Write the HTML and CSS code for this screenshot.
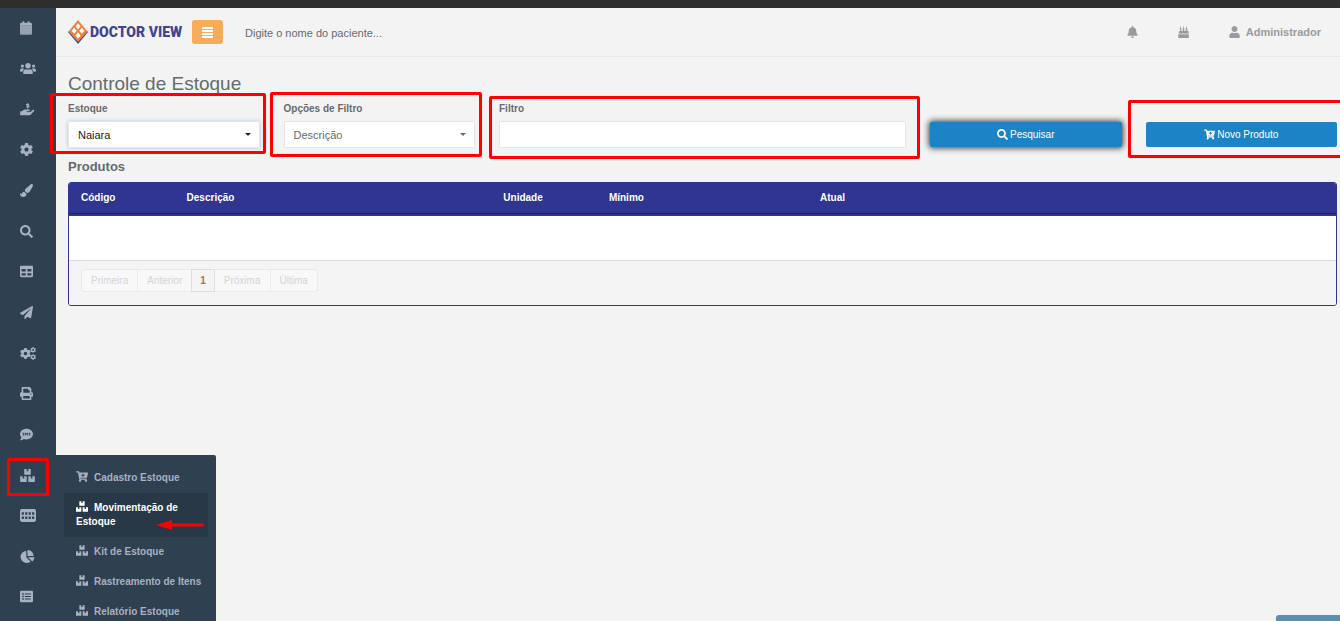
FILE: index.html
```
<!DOCTYPE html>
<html lang="pt-BR">
<head>
    <meta charset="UTF-8">
    <meta name="viewport" content="width=device-width, initial-scale=1.0">
    <title>Doctor View - Controle de Estoque</title>
    <link rel="stylesheet" href="styles.css">
</head>
<body>
    <!-- Shared icons -->
    <svg class="sprite" aria-hidden="true">
        <symbol id="boxes" viewBox="0 0 576 512"><path d="M560 288h-80v96l-32-21.3-32 21.3v-96h-80c-8.8 0-16 7.2-16 16v192c0 8.8 7.2 16 16 16h224c8.8 0 16-7.2 16-16V304c0-8.8-7.2-16-16-16zm-384-64h224c8.8 0 16-7.2 16-16V16c0-8.8-7.2-16-16-16h-80v96l-32-21.3L256 96V0h-80c-8.8 0-16 7.2-16 16v192c0 8.8 7.2 16 16 16zm64 64h-80v96l-32-21.3L96 384v-96H16c-8.8 0-16 7.2-16 16v192c0 8.8 7.2 16 16 16h224c8.8 0 16-7.2 16-16V304c0-8.8-7.2-16-16-16z"/></symbol>
        <symbol id="cart" viewBox="0 0 576 512"><path d="M504.717 320H211.572l6.545 32h268.418c15.401 0 26.816 14.301 23.403 29.319l-5.517 24.276C523.112 414.668 536 433.828 536 456c0 31.202-25.519 56.444-56.824 55.994-29.823-.429-54.35-24.631-55.155-54.447-.44-16.287 6.085-31.049 16.803-41.548H231.176C241.553 426.165 248 440.326 248 456c0 31.813-26.528 57.431-58.67 55.938-28.54-1.325-51.751-24.385-53.251-52.917-1.158-22.034 10.436-41.455 28.051-51.586L93.883 64H24C10.745 64 0 53.255 0 40V24C0 10.745 10.745 0 24 0h102.529c11.401 0 21.228 8.021 23.513 19.19L159.208 64H551.99c15.401 0 26.816 14.301 23.403 29.319l-47.273 208C525.637 312.246 515.923 320 504.717 320zM408 168h-48v-40c0-8.837-7.163-16-16-16h-16c-8.837 0-16 7.163-16 16v40h-48c-8.837 0-16 7.163-16 16v16c0 8.837 7.163 16 16 16h48v40c0 8.837 7.163 16 16 16h16c8.837 0 16-7.163 16-16v-40h48c8.837 0 16-7.163 16-16v-16c0-8.837-7.163-16-16-16z"/></symbol>
        <symbol id="search" viewBox="0 0 512 512"><path d="M505 442.7L405.3 343c-4.5-4.5-10.6-7-17-7H372c27.6-35.3 44-79.7 44-128C416 93.1 322.9 0 208 0S0 93.1 0 208s93.1 208 208 208c48.3 0 92.7-16.4 128-44v16.3c0 6.4 2.5 12.5 7 17l99.7 99.7c9.4 9.4 24.6 9.4 33.9 0l28.3-28.3c9.4-9.4 9.4-24.6.1-34zM208 336c-70.7 0-128-57.2-128-128 0-70.7 57.2-128 128-128 70.7 0 128 57.2 128 128 0 70.7-57.2 128-128 128z"/></symbol>
        <symbol id="cog" viewBox="12 8 488 496"><path d="M487.4 315.7l-42.6-24.6c4.3-23.2 4.3-47 0-70.2l42.6-24.6c4.9-2.8 7.1-8.6 5.5-14-11.1-35.6-30-67.8-54.7-94.6-3.8-4.1-10-5.1-14.8-2.3L380.8 110c-17.9-15.4-38.5-27.3-60.8-35.1V25.8c0-5.6-3.9-10.5-9.4-11.7-36.7-8.2-74.3-7.8-109.2 0-5.5 1.2-9.4 6.1-9.4 11.7V75c-22.2 7.9-42.8 19.8-60.8 35.1L88.7 85.5c-4.9-2.8-11-1.9-14.8 2.3-24.7 26.7-43.6 58.9-54.7 94.6-1.7 5.4.6 11.2 5.5 14L67.3 221c-4.3 23.2-4.3 47 0 70.2l-42.6 24.6c-4.9 2.8-7.1 8.6-5.5 14 11.1 35.6 30 67.8 54.7 94.6 3.8 4.1 10 5.1 14.8 2.3l42.6-24.6c17.9 15.4 38.5 27.3 60.8 35.1v49.2c0 5.6 3.9 10.5 9.4 11.7 36.7 8.2 74.3 7.8 109.2 0 5.5-1.2 9.4-6.1 9.4-11.7v-49.2c22.2-7.9 42.8-19.8 60.8-35.1l42.6 24.6c4.9 2.8 11 1.9 14.8-2.3 24.7-26.7 43.6-58.9 54.7-94.6 1.5-5.5-.7-11.3-5.6-14.1zM256 336c-44.1 0-80-35.9-80-80s35.9-80 80-80 80 35.9 80 80-35.9 80-80 80z"/></symbol>
    </svg>

    <div class="browser-bar"></div>
    <div class="wrapper">
        <!-- Sidebar -->
        <nav class="sidebar">
            <ul class="side-menu">
                <li><a href="#" aria-label="Agenda"><svg class="narrow" viewBox="0 0 448 512"><path opacity=".85" d="M12 176h424c6.600 0 12 5.400 12 12v276c0 26.500-21.500 48-48 48H48c-26.500 0-48-21.500-48-48V188c0-6.600 5.400-12 12-12z"/><path d="M448 176v-64c0-26.500-21.500-48-48-48h-48V12c0-6.600-5.400-12-12-12h-40c-6.600 0-12 5.400-12 12v52H160V12c0-6.600-5.400-12-12-12h-40c-6.600 0-12 5.400-12 12v52H48C21.500 64 0 85.500 0 112v64z"/></svg></a></li>
                <li><a href="#" aria-label="Pacientes"><svg class="wide" viewBox="0 0 640 512"><path d="M96 224c35.3 0 64-28.7 64-64s-28.7-64-64-64-64 28.7-64 64 28.7 64 64 64zm448 0c35.3 0 64-28.7 64-64s-28.7-64-64-64-64 28.7-64 64 28.7 64 64 64zm32 32h-64c-17.6 0-33.5 7.1-45.1 18.6 40.3 22.1 68.9 62 75.1 109.400h66c17.700 0 32-14.300 32-32v-32c0-35.300-28.700-64-64-64zm-256 0c61.900 0 112-50.100 112-112S381.900 32 320 32 208 82.100 208 144s50.100 112 112 112zm76.800 32h-8.300c-20.800 10-43.900 16-68.500 16s-47.600-6-68.500-16h-8.300C179.600 288 128 339.600 128 403.200V432c0 26.500 21.500 48 48 48h288c26.500 0 48-21.500 48-48v-28.800c0-63.600-51.600-115.200-115.200-115.200zm-223.700-13.400C161.500 263.100 145.600 256 128 256H64c-35.300 0-64 28.700-64 64v32c0 17.700 14.300 32 32 32h65.900c6.300-47.400 34.900-87.300 75.200-109.400z"/></svg></a></li>
                <li><a href="#" aria-label="Financeiro"><svg class="medium" viewBox="0 0 576 512"><path d="M0 336q0-16 16-16h56l46-38q30-22 66-22h168c20 0 34 16 32 36-2 16-16 28-34 28h-78c-10 0-16 6-16 14s6 14 16 14h118q14 0 24-8l92-74c14-10 30-10 42 0 14 12 12 34 0 44L410 464q-18 16-42 16H16q-16 0-16-16z"/><path d="M346 62c-20-24-98-20-98 10 0 40 104 16 104 56 0 38-78 40-108 12M298 -10v226" fill="none" stroke="currentColor" stroke-width="42"/></svg></a></li>
                <li><a href="#" aria-label="Configurações"><svg><use href="#cog"/></svg></a></li>
                <li><a href="#" aria-label="Aparência"><svg viewBox="0 0 512 512"><path d="M167.020 309.340c-40.120 2.580-76.530 17.860-97.190 72.300-2.350 6.210-8 9.980-14.590 9.980-11.110 0-45.460-27.670-55.250-34.350C0 439.620 37.930 512 128 512c75.860 0 128-43.770 128-120.190 0-3.110-.65-6.080-.97-9.130l-88.010-73.340zM457.890 0c-15.160 0-29.370 6.710-40.210 16.450C213.270 199.050 192 203.340 192 257.090c0 13.700 3.250 26.760 8.730 38.700l63.820 53.180c7.210 1.800 14.640 3.030 22.390 3.030 62.110 0 98.110-45.470 211.160-256.460 7.380-14.350 13.900-29.850 13.900-45.990C512 20.640 486 0 457.890 0z"/></svg></a></li>
                <li><a href="#" aria-label="Pesquisa"><svg><use href="#search"/></svg></a></li>
                <li><a href="#" aria-label="Tabelas"><svg viewBox="0 0 512 512"><path d="M464 32H48C21.490 32 0 53.490 0 80v352c0 26.510 21.490 48 48 48h416c26.510 0 48-21.490 48-48V80c0-26.510-21.490-48-48-48zM224 416H64v-96h160v96zm0-160H64v-96h160v96zm224 160H288v-96h160v96zm0-160H288v-96h160v96z"/></svg></a></li>
                <li><a href="#" aria-label="Envios"><svg viewBox="0 0 512 512"><path d="M476 3.200L12.500 270.600c-18.100 10.400-15.800 35.600 2.200 43.200L121 358.400l287.300-253.200c5.500-4.900 13.300 2.600 8.600 8.300L176 407v80.500c0 23.600 28.500 32.900 42.500 15.800L282 426l124.600 52.200c14.200 6 30.400-2.900 33-18.200l72-432C515 7.800 493.300-6.800 476 3.200z"/></svg></a></li>
                <li><a href="#" aria-label="Parâmetros"><svg class="wide" viewBox="0 0 640 512"><use href="#cog" x="0" y="36" width="440" height="440"/><use href="#cog" x="410" y="0" width="230" height="230"/><use href="#cog" x="410" y="282" width="230" height="230"/></svg></a></li>
                <li><a href="#" aria-label="Impressão"><svg viewBox="0 0 512 512"><path d="M448 192V77.250c0-8.490-3.370-16.620-9.370-22.630L393.370 9.370c-6-6-14.140-9.370-22.630-9.370H96C78.330 0 64 14.330 64 32v160c-35.350 0-64 28.650-64 64v112c0 8.840 7.160 16 16 16h48v96c0 17.670 14.330 32 32 32h320c17.670 0 32-14.330 32-32v-96h48c8.840 0 16-7.160 16-16V256c0-35.350-28.650-64-64-64zm-64 256H128v-96h256v96zm0-224H128V64h192v48c0 8.840 7.160 16 16 16h48v96zm48 72c-13.250 0-24-10.750-24-24 0-13.260 10.750-24 24-24s24 10.740 24 24c0 13.250-10.750 24-24 24z"/></svg></a></li>
                <li><a href="#" aria-label="SMS"><svg viewBox="0 0 512 512"><path fill-rule="evenodd" d="M256 32C115 32 0 125 0 240c0 50 21 95 57 131-13 50-54 95-55 95-5 6-1 14 6 14 66 0 116-32 140-51 33 12 69 19 108 19 141 0 256-93 256-208S397 32 256 32zM104 186h62v26h-36v14h36v74h-62v-26h36v-14h-36zm90 0h26l36 40 36-40h26v114h-28v-64l-34 38-34-38v64h-28zm152 0h62v26h-36v14h36v74h-62v-26h36v-14h-36z"/></svg></a></li>
                <li>
                    <a href="#" aria-label="Estoque"><svg class="medium"><use href="#boxes"/></svg></a>
                    <span class="mark mark-menu"></span>
                    <ul class="submenu">
                        <li><a href="#"><svg><use href="#cart"/></svg>Cadastro Estoque</a></li>
                        <li class="active">
                            <a href="#"><svg><use href="#boxes"/></svg>Movimentação de Estoque</a>
                            <svg class="arrow" viewBox="0 0 48 10" aria-hidden="true"><path d="M0 5L16 0v3.500h30q2 0 2 1.500t-2 1.500H16V10z"/></svg>
                        </li>
                        <li><a href="#"><svg><use href="#boxes"/></svg>Kit de Estoque</a></li>
                        <li><a href="#"><svg><use href="#boxes"/></svg>Rastreamento de Itens</a></li>
                        <li><a href="#"><svg><use href="#boxes"/></svg>Relatório Estoque</a></li>
                    </ul>
                </li>
                <li><a href="#" aria-label="Calendário"><svg class="wide" viewBox="0 0 640 512"><path fill-rule="evenodd" d="M72 0h496q72 0 72 72v368q0 72-72 72H72q-72 0-72-72V72q0-72 72-72zM70 130v100h86V130zm138 0v100h86V130zm138 0v100h86V130zm138 0v100h86V130zM70 300v100h86V300zm138 0v100h86V300zm138 0v100h86V300zm138 0v100h86V300z"/></svg></a></li>
                <li><a href="#" aria-label="Gráficos"><svg class="medium" viewBox="0 0 544 512"><path d="M527.790 288H290.500l158.030 158.030c6.040 6.040 15.980 6.530 22.190.68 38.700-36.460 65.320-85.610 73.130-140.860 1.340-9.460-6.510-17.850-16.060-17.850zm-15.830-64.800C503.720 103.740 408.260 8.280 288.800.04 279.680-.59 272 7.100 272 16.240V240h223.770c9.140 0 16.820-7.680 16.190-16.800zM224 288V50.710c0-9.550-8.390-17.400-17.840-16.060C86.990 51.490-4.100 155.600.14 280.370 4.500 408.510 114.830 513.590 243.030 511.980c50.400-.63 96.970-16.870 135.260-44.030 7.900-5.600 8.420-17.230 1.570-24.080L224 288z"/></svg></a></li>
                <li><a href="#" aria-label="Relatórios"><svg viewBox="0 0 512 512"><path fill-rule="evenodd" d="M48 32h416q48 0 48 48v352q0 48-48 48H48q-48 0-48-48V80q0-48 48-48zM88 132v56h60v-56zm0 96v56h60v-56zm0 96v56h60v-56zM192 138v44h232v-44zm0 96v44h232v-44zm0 96v44h232v-44z"/></svg></a></li>
            </ul>
        </nav>

        <div class="page">
            <!-- Top bar -->
            <header class="topbar">
                <a class="logo" href="#">
                    <svg viewBox="0 0 20 24" aria-hidden="true">
                        <path fill="#434493" d="M0 12L10 24l10-12-1-1-9 10-9-10z"/>
                        <path fill="#f0803c" d="M10 0l9.500 11.500L10 22 .5 11.500z"/>
                        <path fill="#fff" d="M10 3.200l2.500 3.100L10 9.400 7.500 6.300zM6.200 7.800l2.500 3-2.500 3-2.700-3zM13.800 7.800l2.700 3-2.700 3-2.500-3zM10 12.300l2.500 3.100-2.500 3.200-2.500-3.200z"/>
                    </svg>
                    <span>DOCTOR VIEW</span>
                </a>
                <button class="menu-toggle" type="button" aria-label="Menu"><svg viewBox="0 0 11 11"><path d="M0 0h11v2H0zM0 3h11v2H0zM0 6h11v2H0zM0 9h11v2H0z"/></svg></button>
                <input class="patient-search" type="text" placeholder="Digite o nome do paciente..." aria-label="Digite o nome do paciente">
                <div class="top-links">
                    <a href="#" aria-label="Notificações"><svg viewBox="0 0 448 512"><path d="M224 512c35.320 0 63.970-28.650 63.970-64H160.030c0 35.350 28.650 64 63.970 64zm215.390-149.710c-19.320-20.760-55.470-51.990-55.470-154.290 0-77.700-54.480-139.900-127.940-155.160V32c0-17.670-14.320-32-31.980-32s-31.980 14.330-31.980 32v20.840C118.560 68.100 64.080 130.300 64.080 208c0 102.300-36.150 133.530-55.470 154.290-6 6.450-8.660 14.160-8.610 21.710.11 16.400 12.980 32 32.100 32h383.800c19.120 0 32-15.600 32.100-32 .05-7.550-2.610-15.270-8.610-21.710z"/></svg></a>
                    <a href="#" aria-label="Aniversariantes"><svg viewBox="0 0 448 512"><path d="M64 90h64v126h64V90h64v126h64V90h64v126h16q48 0 48 48v54c-34 22-52-6-75-6-26 0-34 24-75 24s-50-24-74-24c-25 0-34 24-75 24s-49-24-74-24c-23 0-37 28-55 6v-54q0-48 48-48h16zM0 350c34 16 50-12 75-12s34 24 75 24 49-24 74-24 34 24 74 24 49-24 75-24c23 0 40 28 75 12v162H0zM96 0q44 52 0 80-44-28 0-80zm128 0q44 52 0 80-44-28 0-80zm128 0q44 52 0 80-44-28 0-80z"/></svg></a>
                    <a href="#"><svg viewBox="0 0 448 512"><path d="M224 256c70.700 0 128-57.300 128-128S294.700 0 224 0 96 57.300 96 128s57.300 128 128 128zm89.600 32h-16.700c-22.200 10.200-46.900 16-72.900 16s-50.600-5.800-72.900-16h-16.700C60.200 288 0 348.200 0 422.400V464c0 26.500 21.500 48 48 48h352c26.500 0 48-21.500 48-48v-41.600c0-74.200-60.200-134.400-134.400-134.400z"/></svg>Administrador</a>
                </div>
            </header>

            <!-- Stock control -->
            <main class="content">
                <h1>Controle de Estoque</h1>
                <form class="filters">
                    <div class="field">
                        <label for="estoque">Estoque</label>
                        <div class="select focused">
                            <select id="estoque"><option>Naiara</option></select>
                        </div>
                        <span class="mark mark-stock"></span>
                    </div>
                    <div class="field">
                        <label for="opcoes">Opções de Filtro</label>
                        <div class="select">
                            <select id="opcoes"><option>Descrição</option></select>
                        </div>
                        <span class="mark mark-options"></span>
                    </div>
                    <div class="field field-wide">
                        <label for="filtro">Filtro</label>
                        <input id="filtro" type="text">
                        <span class="mark mark-filter"></span>
                    </div>
                    <div class="field">
                        <button class="btn raised" type="button"><svg><use href="#search"/></svg>Pesquisar</button>
                    </div>
                    <div class="field">
                        <button class="btn" type="button"><svg><use href="#cart"/></svg>Novo Produto</button>
                        <span class="mark mark-new"></span>
                    </div>
                </form>

                <h2>Produtos</h2>
                <div class="grid">
                    <table>
                        <colgroup>
                            <col class="col-code">
                            <col class="col-description">
                            <col class="col-unit">
                            <col class="col-min">
                            <col>
                        </colgroup>
                        <thead>
                            <tr><th>Código</th><th>Descrição</th><th>Unidade</th><th>Mínimo</th><th>Atual</th></tr>
                        </thead>
                        <tbody>
                            <tr><td colspan="5"></td></tr>
                        </tbody>
                    </table>
                    <div class="pager">
                        <button type="button" disabled>Primeira</button>
                        <button type="button" disabled>Anterior</button>
                        <button type="button" class="current">1</button>
                        <button type="button" disabled>Próxima</button>
                        <button type="button" disabled>Última</button>
                    </div>
                </div>
            </main>
        </div>
    </div>
    <div class="chat-tab"></div>
</body>
</html>
```

FILE: styles.css
```
* {
    box-sizing: border-box;
}

body {
    margin: 0;
    height: 100vh;
    overflow: hidden;
    display: flex;
    flex-direction: column;
    font-family: "Liberation Sans", Arial, sans-serif;
    font-size: 10px;
    color: #676a6c;
    background: #f3f3f3;
}

a {
    color: inherit;
    text-decoration: none;
}

svg {
    fill: currentColor;
}

input, select, button {
    font-family: inherit;
    color: inherit;
}

.sprite {
    position: absolute;
    width: 0;
    height: 0;
}

.browser-bar {
    flex: none;
    height: 8px;
    background: #2d2d2d;
}

.wrapper {
    flex: 1;
    min-height: 0;
    display: flex;
}

/* Sidebar */
.sidebar {
    flex: none;
    width: 56px;
    background: #2f4050;
    color: #a7b1c2;
}

.side-menu {
    height: 100%;
    margin: 0;
    padding: 10px 0 14px;
    list-style: none;
    display: flex;
    flex-direction: column;
    justify-content: space-between;
}

.side-menu > li {
    position: relative;
    height: 20px;
    padding-left: 20px;
}

.side-menu > li > a {
    display: flex;
    align-items: center;
    height: 20px;
}

.side-menu > li > a svg {
    width: 13px;
    height: 13px;
}

.side-menu > li > a .narrow {
    width: 12px;
    height: 14px;
}

.side-menu > li > a .medium {
    width: 15px;
}

.side-menu > li > a .wide {
    width: 16px;
}

.submenu {
    position: absolute;
    top: -10px;
    left: 36px;
    left: 56px;
    z-index: 5;
    width: 160px;
    margin: 0;
    padding: 8px;
    list-style: none;
    background: #2f4050;
    border-radius: 0 2px 2px 0;
    font-weight: bold;
    line-height: 14px;
}

.submenu li {
    position: relative;
    padding: 8px 4px 8px 12px;
}

.submenu li:last-child {
    padding-bottom: 0;
}

.submenu li a svg {
    width: 12px;
    height: 11px;
    margin-right: 6px;
    vertical-align: -1px;
}

.submenu .active {
    background: #293846;
    color: #fff;
}

.submenu .arrow {
    position: absolute;
    right: 4px;
    bottom: 7px;
    width: 48px;
    height: 10px;
    fill: #f00;
}

/* Top bar */
.page {
    flex: 1;
    min-width: 0;
}

.topbar {
    display: flex;
    align-items: center;
    height: 49px;
    padding: 0 19px 0 12px;
    border-bottom: 1px solid #e7eaec;
}

.logo {
    display: flex;
    align-items: center;
    gap: 2px;
    width: 124px;
    font: 900 14px/24px Roboto, sans-serif;
    color: #434493;
    white-space: nowrap;
}

.logo svg {
    flex: none;
    width: 20px;
    height: 24px;
}

.menu-toggle {
    display: flex;
    align-items: center;
    justify-content: center;
    width: 31px;
    height: 24px;
    padding: 0;
    border: 0;
    border-radius: 3px;
    background: #f8ac59;
    color: #fff;
}

.menu-toggle svg {
    width: 11px;
    height: 11px;
}

.patient-search {
    width: 200px;
    margin-left: 20px;
    padding: 3px 2px 2px;
    border: 0;
    background: transparent;
    font-size: 11px;
}

.patient-search::placeholder {
    color: #676a6c;
}

.top-links {
    display: flex;
    gap: 40px;
    margin-left: auto;
    font-size: 11px;
    font-weight: bold;
    color: #999c9e;
}

.top-links a {
    display: flex;
    align-items: center;
    gap: 6px;
}

.top-links svg {
    width: 11px;
    height: 12px;
}

/* Content */
.content {
    padding: 15px 3px 0 12px;
}

h1 {
    margin: 0 0 6px;
    font-size: 19px;
    font-weight: normal;
    line-height: 24px;
}

h2 {
    margin: 11px 0 7px;
    font-size: 13px;
    line-height: 16px;
}

.filters {
    display: grid;
    grid-template-columns: repeat(6, 1fr);
    column-gap: 24px;
}

.field {
    position: relative;
    display: flex;
    flex-direction: column;
    justify-content: flex-end;
    min-width: 0;
}

.field-wide {
    grid-column: span 2;
}

.field label {
    margin-bottom: 5px;
    font-weight: bold;
    line-height: 14px;
}

.field input, .select select {
    display: block;
    width: 100%;
    height: 27px;
    padding: 0 9px;
    border: 1px solid #e5e6e7;
    border-radius: 1px;
    background: #fff;
    font-size: 11px;
    appearance: none;
}

.select {
    position: relative;
}

.select::after {
    content: "";
    position: absolute;
    top: 12px;
    right: 9px;
    border: 3px solid transparent;
    border-top-color: currentColor;
    border-bottom: 0;
}

.focused {
    color: #222;
    box-shadow: 0 0 4px #a9cbea;
}

.btn {
    display: flex;
    align-items: center;
    justify-content: center;
    gap: 2px;
    height: 25px;
    margin-bottom: 1px;
    padding: 0;
    border: 0;
    border-radius: 2px;
    background: #1c84c6;
    color: #fff;
    font-size: 10px;
}

.btn svg {
    width: 11px;
    height: 11px;
}

.raised {
    box-shadow: 0 0 6px 1px #333;
}

/* Red highlight boxes */
.mark {
    position: absolute;
    z-index: 6;
    border: 3px solid #f00;
    border-radius: 2px;
    pointer-events: none;
}

.mark-menu {
    width: 42px;
    inset: -7px auto -11px 7px;
}

.mark-stock {
    inset: -9px -6px -6px -18px;
}

.mark-options {
    inset: -10px -7px -9px -14px;
}

.mark-filter {
    inset: -6px -14px -11px -10px;
}

.mark-new {
    inset: -2px -8px -10px -18px;
}

/* Product table */
.grid {
    border: 1px solid #2f3590;
    border-radius: 3px;
    overflow: hidden;
}

table {
    width: 100%;
    table-layout: fixed;
    border-collapse: collapse;
}

.col-code, .col-unit {
    width: calc(100% / 12);
}

.col-description {
    width: 25%;
}

.col-min {
    width: calc(100% / 6);
}

th {
    height: 33px;
    padding: 0 12px 4px;
    background: #2f3590;
    box-shadow: inset 0 -2px #2f3590, inset 0 -3px #2310a8;
    color: #fff;
    text-align: left;
}

td {
    height: 44px;
    background: #fff;
    border-bottom: 1px solid #ddd;
}

.pager {
    display: flex;
    padding: 8px 12px 13px;
    background: #f4f4f4;
}

.pager button {
    height: 23px;
    margin-right: -1px;
    padding: 0 9px;
    border: 1px solid #eaeaea;
    background: #f8f8f8;
    color: #d3d4d5;
    font-size: 10px;
}

.pager button:first-child {
    border-radius: 3px 0 0 3px;
}

.pager button:last-child {
    border-radius: 0 3px 3px 0;
}

.pager .current {
    z-index: 1;
    padding: 0 8px;
    border-color: #ddd;
    background: #f4f4f4;
    color: #a07850;
    font-weight: bold;
}

/* Chat tab, cut by the window edge */
.chat-tab {
    position: fixed;
    right: 0;
    bottom: 0;
    width: 64px;
    height: 6px;
    border-radius: 3px 0 0 0;
    background: #5a8fad;
}
```
